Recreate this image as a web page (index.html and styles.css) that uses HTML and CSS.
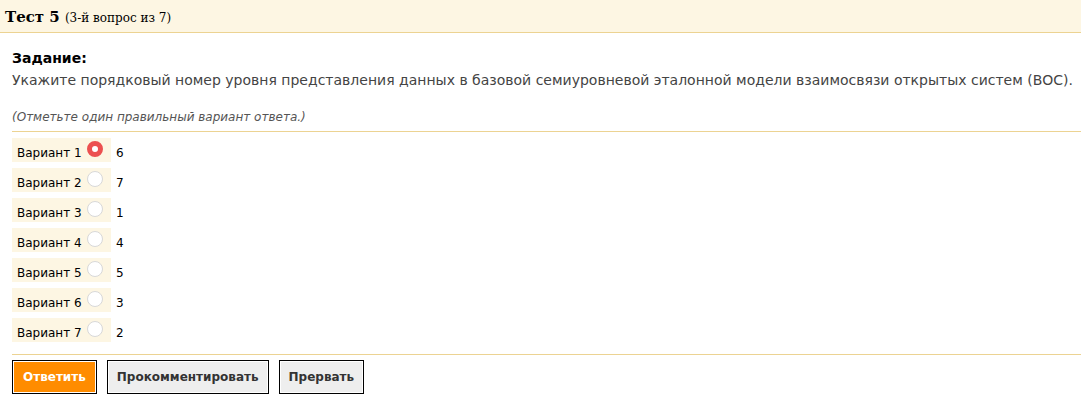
FILE: index.html
```html
<!DOCTYPE html>
<html lang="ru">
<head>
    <meta charset="UTF-8">
    <title>Тест 5</title>
    <link rel="stylesheet" href="styles.css">
</head>
<body>
    <div class="test-header">
        <b>Тест 5</b> <span class="counter">(3-й вопрос из 7)</span>
    </div>
    <div class="question">
        <div class="task-title">Задание:</div>
        <div class="task-text">Укажите порядковый номер уровня представления данных в базовой семиуровневой эталонной модели взаимосвязи открытых систем (ВОС).</div>
        <div class="hint">(Отметьте один правильный вариант ответа.)</div>
        <div class="answers">
            <div class="answer"><label class="variant">Вариант 1 <span class="radio checked"></span></label><span class="value">6</span></div>
            <div class="answer"><label class="variant">Вариант 2 <span class="radio"></span></label><span class="value">7</span></div>
            <div class="answer"><label class="variant">Вариант 3 <span class="radio"></span></label><span class="value">1</span></div>
            <div class="answer"><label class="variant">Вариант 4 <span class="radio"></span></label><span class="value">4</span></div>
            <div class="answer"><label class="variant">Вариант 5 <span class="radio"></span></label><span class="value">5</span></div>
            <div class="answer"><label class="variant">Вариант 6 <span class="radio"></span></label><span class="value">3</span></div>
            <div class="answer"><label class="variant">Вариант 7 <span class="radio"></span></label><span class="value">2</span></div>
        </div>
        <div class="buttons">
            <button class="btn btn-main">Ответить</button>
            <button class="btn">Прокомментировать</button>
            <button class="btn">Прервать</button>
        </div>
    </div>
</body>
</html>
```
FILE: styles.css
```css
body {
    margin: 0;
    padding: 0;
    background: #fff;
    font-family: "DejaVu Sans", sans-serif;
    color: #444;
}
.test-header {
    background-color: #fdf6e3;
    border-bottom: 1px solid #ecd392;
    height: 32px;
    line-height: 33px;
    padding-left: 5px;
    font-family: "DejaVu Serif", serif;
    color: #000;
}
.test-header b {
    font-size: 15px;
}
.counter {
    font-size: 12px;
}
.question {
    padding: 14px 0 0 12px;
}
.task-title {
    font-size: 14px;
    font-weight: bold;
    color: #000;
    line-height: 22px;
}
.task-text {
    font-size: 14px;
    line-height: 22px;
}
.hint {
    margin-top: 19px;
    font-size: 12px;
    font-style: italic;
    color: #555;
    line-height: 14px;
    padding-bottom: 7px;
    border-bottom: 1px solid #ecd392;
}
.answers {
    padding-top: 6px;
    padding-bottom: 12px;
    border-bottom: 1px solid #ecd392;
}
.answer {
    display: flex;
    align-items: center;
    height: 24px;
    margin-bottom: 6px;
    font-size: 12px;
    color: #000;
}
.answer:last-child {
    margin-bottom: 0;
}
.variant {
    display: flex;
    align-items: flex-start;
    gap: 5px;
    width: 94px;
    height: 24px;
    padding-left: 5px;
    line-height: 30px;
    background: #fdf6e3;
}
.radio {
    width: 14px;
    height: 14px;
    margin-top: 3px;
    border: 1px solid #d8d8d8;
    border-radius: 50%;
    background: #fff;
    box-sizing: content-box;
}
.radio.checked {
    width: 6px;
    height: 6px;
    border: 5px solid #ec5050;
    background: #fff;
}
.value {
    margin-left: 5px;
    line-height: 30px;
    align-self: flex-start;
}
.buttons {
    display: flex;
    gap: 10px;
    padding-top: 5px;
}
.btn {
    height: 34px;
    padding: 0 9px;
    font-family: "DejaVu Sans", sans-serif;
    font-size: 12px;
    font-weight: bold;
    color: #333;
    background: #eee;
    border: 1px solid #000;
    box-shadow: inset 0 0 0 1px #fff;
    cursor: pointer;
}
.btn-main {
    padding: 0 10px;
    background: #ff8c00;
    color: #fff;
}
```
